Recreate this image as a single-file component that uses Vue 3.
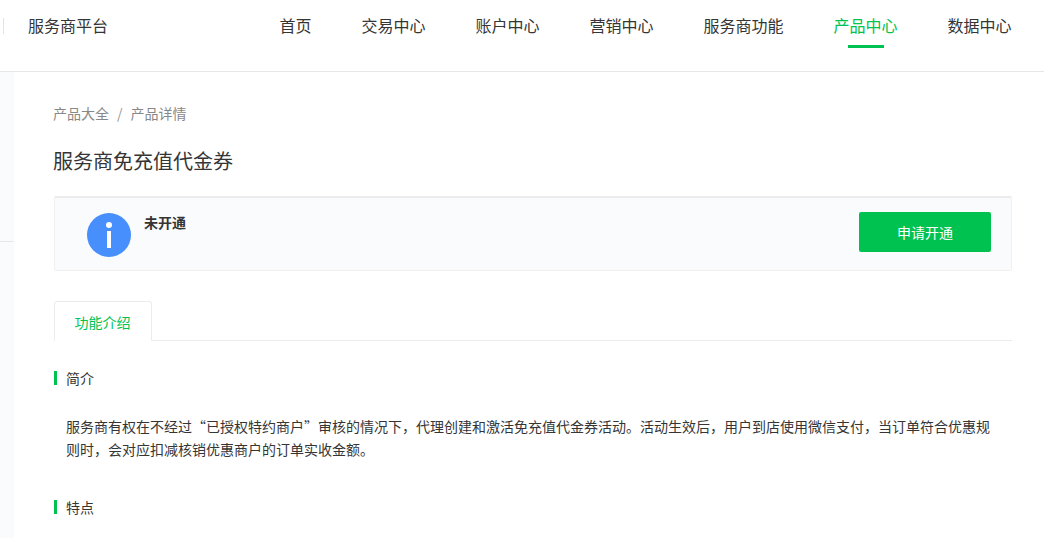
<script setup>
const navItems = [
  { label: '首页' },
  { label: '交易中心' },
  { label: '账户中心' },
  { label: '营销中心' },
  { label: '服务商功能' },
  { label: '产品中心', active: true },
  { label: '数据中心' },
]
</script>

<template>
  <div class="page">
    <header class="header">
      <span class="tick"></span>
      <span class="brand">服务商平台</span>
      <nav class="nav">
        <a v-for="item in navItems" :key="item.label" class="nav-item" :class="{ active: item.active }">{{ item.label }}</a>
      </nav>
    </header>
    <div class="body">
      <aside class="side">
        <div class="side-top"></div>
      </aside>
      <main class="main">
        <div class="crumbs">
          <span>产品大全</span>
          <span class="sep">/</span>
          <span>产品详情</span>
        </div>
        <h1 class="title">服务商免充值代金券</h1>
        <section class="status">
          <svg class="info" width="44" height="44" viewBox="0 0 44 44">
            <circle cx="22" cy="22" r="22" fill="#468ffc" />
            <circle cx="22" cy="12" r="3" fill="#fff" />
            <rect x="20" y="18" width="4" height="17" fill="#fff" />
          </svg>
          <strong class="status-text">未开通</strong>
          <button class="apply" type="button">申请开通</button>
        </section>
        <div class="tabs">
          <div class="tab">功能介绍</div>
        </div>
        <h2 class="sec-title first">简介</h2>
        <p class="desc">服务商有权在不经过“已授权特约商户”审核的情况下，代理创建和激活免充值代金券活动。活动生效后，用户到店使用微信支付，当订单符合优惠规则时，会对应扣减核销优惠商户的订单实收金额。</p>
        <h2 class="sec-title second">特点</h2>
      </main>
    </div>
  </div>
</template>

<style>
html, body { margin: 0; background: #fff; overflow: hidden; }
</style>

<style scoped>
.page {
  width: 1044px;
  height: 538px;
  overflow: hidden;
  font-family: "Noto Sans CJK SC", "Liberation Sans", sans-serif;
  color: #353535;
}
.header {
  height: 71px;
  border-bottom: 1px solid #e7e7e7;
  display: flex;
  align-items: flex-start;
}
.tick {
  width: 1px;
  height: 16px;
  margin: 18px 0 0 3px;
  background: #e5e5e5;
}
.brand {
  margin-left: 24px;
  font-size: 16px;
  line-height: 24px;
  margin-top: 13px;
  color: #353535;
}
.nav {
  margin-left: auto;
  margin-right: 32.5px;
  display: flex;
  gap: 50px;
}
.nav-item {
  position: relative;
  font-size: 16px;
  line-height: 24px;
  margin-top: 13px;
  color: #353535;
}
.nav-item.active { color: #00c250; }
.nav-item.active::after {
  content: "";
  position: absolute;
  left: 15px;
  right: 13px;
  top: 32px;
  height: 3px;
  background: #00c250;
}
.body {
  display: flex;
  height: 466px;
}
.side {
  width: 14px;
  flex: none;
  background: #fafbfc;
}
.side-top {
  height: 169px;
  border-bottom: 1px solid #e7e7e7;
}
.main {
  flex: 1;
  padding: 0 32px 0 40px;
  min-width: 0;
}
.crumbs {
  margin: 31px 0 0 -1px;
  font-size: 14px;
  line-height: 20px;
  color: #888;
  display: flex;
  gap: 8px;
}
.sep { color: #999; }
.title {
  margin: 24px 0 0 -1px;
  font-size: 20px;
  font-weight: 400;
  line-height: 28px;
  color: #353535;
}
.status {
  margin-top: 21px;
  height: 75px;
  box-sizing: border-box;
  background: #fafbfc;
  border: 1px solid #f0f0f0;
  border-top: 2px solid #ebebeb;
  border-radius: 2px;
  display: flex;
  align-items: flex-start;
  padding-left: 32px;
  padding-right: 20px;
}
.info { margin-top: 15px; flex: none; }
.status-text {
  margin: 14px 0 0 13px;
  font-size: 14px;
  line-height: 20px;
  font-weight: 700;
  color: #353535;
}
.apply {
  margin: 14px 0 0 auto;
  width: 132px;
  height: 40px;
  background: #00c250;
  color: #fff;
  border: 0;
  border-radius: 2px;
  font: inherit;
  font-size: 14px;
}
.tabs {
  margin-top: 30px;
  height: 40px;
  box-sizing: border-box;
  border-bottom: 1px solid #ececec;
  display: flex;
}
.tab {
  width: 98px;
  height: 40px;
  box-sizing: border-box;
  border: 1px solid #ececec;
  border-bottom: 1px solid #fff;
  border-radius: 3px 3px 0 0;
  color: #00c250;
  font-size: 14px;
  line-height: 40px;
  text-align: center;
  padding-right: 1px;
}
.sec-title {
  margin: 0;
  font-size: 14px;
  font-weight: 400;
  line-height: 14px;
  height: 14px;
  border-left: 3px solid #00c250;
  padding-left: 9px;
  color: #353535;
}
.sec-title.first { margin-top: 30px; }
.sec-title.second { margin-top: 39px; }
.desc {
  margin: 30px 20px 0 12px;
  font-size: 14px;
  line-height: 23px;
  color: #353535;
  font-variant-east-asian: full-width;
}
</style>
